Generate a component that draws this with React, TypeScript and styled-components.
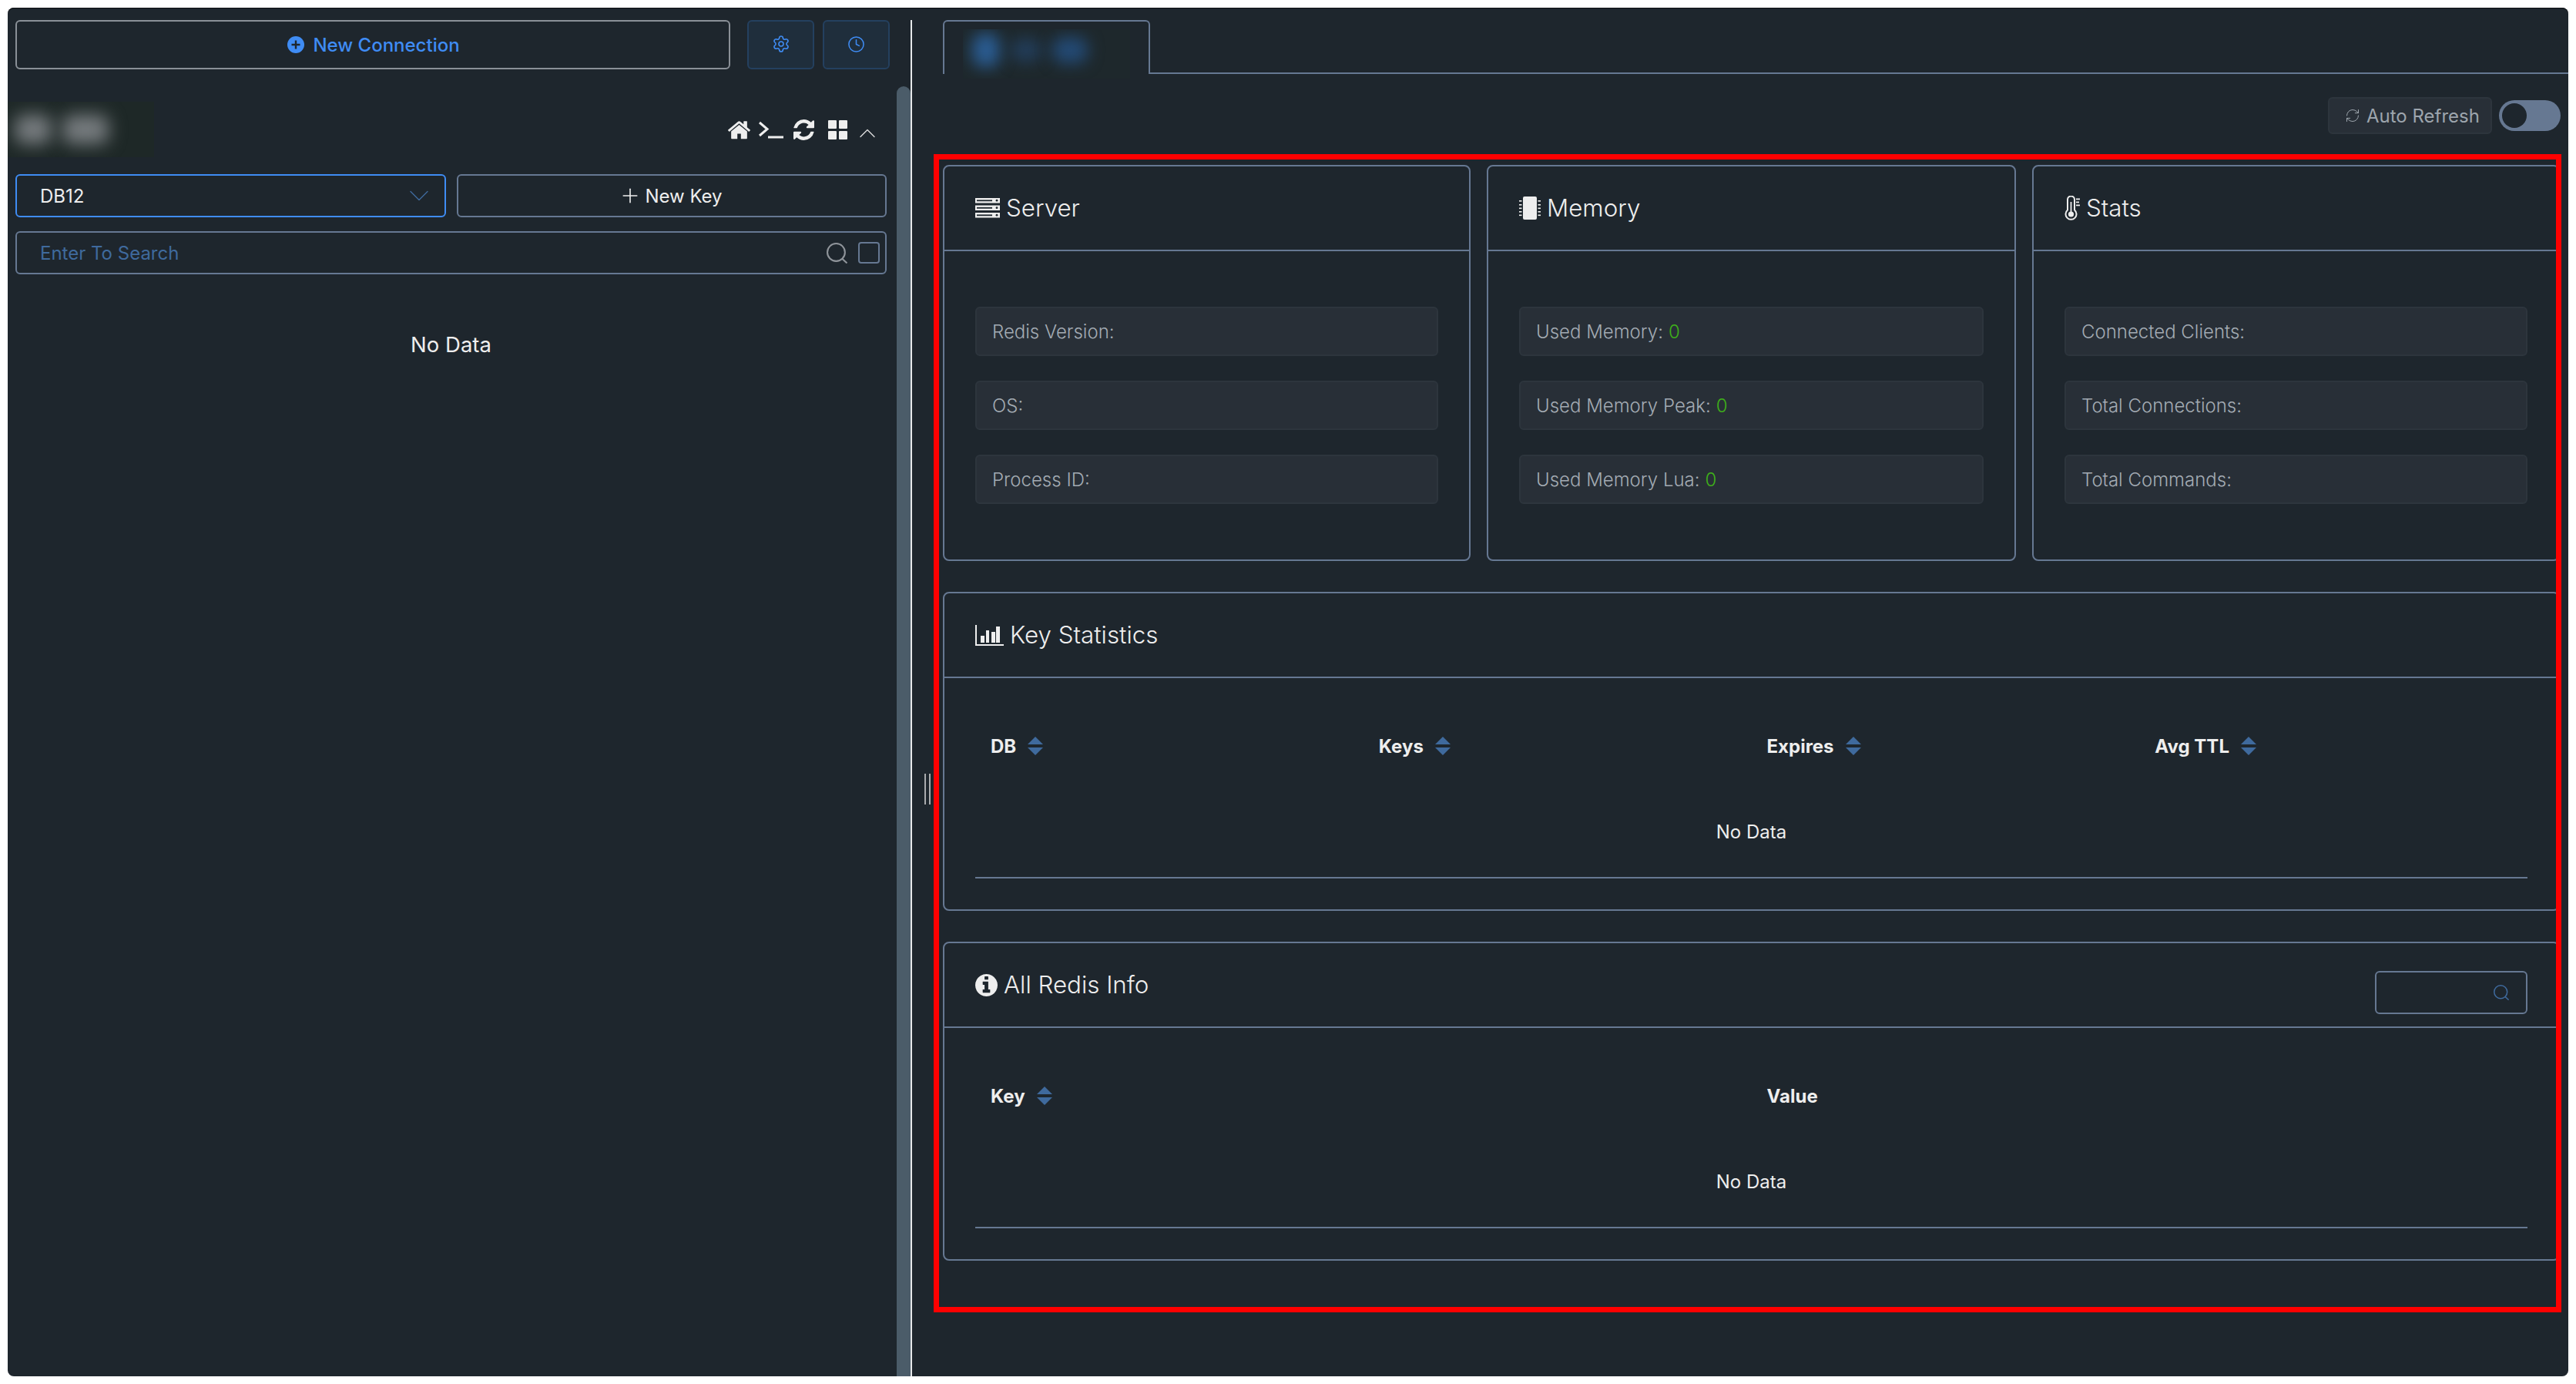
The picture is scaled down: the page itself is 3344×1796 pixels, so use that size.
import React from 'react'
import styled, { createGlobalStyle } from 'styled-components'
import { Plus, Settings, Clock, ChevronDown, ChevronUp, RefreshCw } from 'lucide-react'

const lineColor = '#667892'
const bgColor = '#1e262d'
const blue = '#3f8cf4'
const dimBlue = '#3f6a9d'

const GlobalStyle = createGlobalStyle`
  html, body {
    margin: 0;
    padding: 0;
    background: #fff;
    font-family: Inter, "Noto Sans", sans-serif;
  }
  * {
    box-sizing: border-box;
  }
`

const ServerIcon = () => (
  <svg width="32" height="26" viewBox="0 0 32 26" fill="none">
    {[0, 9.5, 19].map((y) => (
      <g key={y}>
        <rect x="0" y={y} width="32" height="6.5" fill="#eee" />
        <rect x="2" y={y + 2.4} width="20" height="1.8" fill={bgColor} />
        <circle cx="28" cy={y + 3.2} r="1.4" fill={bgColor} />
      </g>
    ))}
  </svg>
)

const ChipIcon = () => (
  <svg width="28" height="30" viewBox="0 0 28 30">
    <rect x="5" y="0" width="18" height="30" rx="2" fill="#eee" />
    {[6, 11, 15.5, 20, 24.5].map((y) => (
      <g key={y}>
        <rect x="0" y={y - 1} width="3.5" height="1.6" fill="#eee" />
        <rect x="24.5" y={y - 1} width="3.5" height="1.6" fill="#eee" />
      </g>
    ))}
  </svg>
)

const ThermometerIcon = () => (
  <svg width="20" height="32" viewBox="0 0 20 32" fill="none">
    <path
      d="M4 18.5V5a4.5 4.5 0 0 1 9 0v13.5a7 7 0 1 1-9 0Z"
      stroke="#eee"
      strokeWidth="2"
    />
    <rect x="7.6" y="8" width="1.8" height="14" fill="#eee" />
    <circle cx="8.5" cy="24" r="3.6" fill="#eee" />
    <rect x="15" y="3.5" width="5" height="1.8" fill="#eee" />
    <rect x="15" y="7.5" width="4" height="1.8" fill="#eee" />
    <rect x="15" y="11.5" width="5" height="1.8" fill="#eee" />
  </svg>
)

const BarChartIcon = () => (
  <svg width="37" height="27" viewBox="0 0 37 27">
    <rect x="0" y="0" width="2" height="27" fill="#eee" />
    <rect x="0" y="25" width="37" height="2" fill="#eee" />
    <rect x="7" y="14" width="5" height="9" fill="#eee" />
    <rect x="14" y="7" width="4" height="16" fill="#eee" />
    <rect x="21" y="9" width="5" height="14" fill="#eee" />
    <rect x="27" y="2" width="5" height="21" fill="#eee" />
  </svg>
)

const InfoIcon = () => (
  <svg width="29" height="29" viewBox="128 128 1536 1536" fill="#eee">
    <path d="M1152 1376v-160q0-14-9-23t-23-9h-96v-512q0-14-9-23t-23-9h-320q-14 0-23 9t-9 23v160q0 14 9 23t23 9h96v320h-96q-14 0-23 9t-9 23v160q0 14 9 23t23 9h448q14 0 23-9t9-23zm-128-896v-160q0-14-9-23t-23-9h-192q-14 0-23 9t-9 23v160q0 14 9 23t23 9h192q14 0 23-9t9-23zm640 416q0 209-103 385.5t-279.5 279.5-385.5 103-385.5-103-279.5-279.5-103-385.5 103-385.5 279.5-279.5 385.5-103 385.5 103 279.5 279.5 103 385.5z" />
  </svg>
)

const HomeIcon = () => (
  <svg width="29" height="29" viewBox="90 230 1612 1300" fill="#eee">
    <path d="M1472 992v480q0 26-19 45t-45 19h-384v-384h-256v384h-384q-26 0-45-19t-19-45v-480q0-1 .5-3t.5-3l575-474 575 474q1 2 1 6zm223-69l-62 74q-8 9-21 11h-3q-13 0-21-7l-692-577-692 577q-12 8-24 7-13-2-21-11l-62-74q-8-10-7-23.5t11-21.5l719-599q32-26 76-26t76 26l244 204v-195q0-14 9-23t23-9h192q14 0 23 9t9 23v408l219 182q10 8 11 21.5t-7 23.5z" />
  </svg>
)

const TerminalIcon = () => (
  <svg width="32" height="24" viewBox="0 0 32 24" fill="none" stroke="#eee" strokeWidth="3">
    <path d="M1 3 L11 11.5 L1 20" />
    <path d="M12 22 H32" />
  </svg>
)

const SyncIcon = () => (
  <svg width="27" height="27" viewBox="128 128 1536 1536" fill="#eee">
    <path d="M1639 1056q0 5-1 7-64 268-268 434.5t-478 166.5q-146 0-282.5-55t-243.5-157l-129 129q-19 19-45 19t-45-19-19-45v-448q0-26 19-45t45-19h448q26 0 45 19t19 45-19 45l-137 137q71 66 161 102t187 36q134 0 250-65t186-179q11-17 53-117 8-23 30-23h192q13 0 22.5 9.5t9.5 22.5zm25-800v448q0 26-19 45t-45 19h-448q-26 0-45-19t-19-45 19-45l138-138q-148-137-349-137-134 0-250 65t-186 179q-11 17-53 117-8 23-30 23h-199q-13 0-22.5-9.5t-9.5-22.5v-7q65-268 270-434.5t480-166.5q146 0 284 55.5t245 156.5l130-129q19-19 45-19t45 19 19 45z" />
  </svg>
)

const GridIcon = () => (
  <svg width="25" height="25" viewBox="0 0 25 25" fill="#eee">
    <rect x="0" y="0" width="11" height="11" rx="1" />
    <rect x="14" y="0" width="11" height="11" rx="1" />
    <rect x="0" y="14" width="11" height="11" rx="1" />
    <rect x="14" y="14" width="11" height="11" rx="1" />
  </svg>
)

const LensIcon = ({ size, color }: { size: number; color: string }) => (
  <svg width={size} height={size} viewBox="0 0 26 26" fill="none" stroke={color} strokeWidth="2">
    <circle cx="12" cy="12" r="11" />
    <path d="M19.5 20 L25.5 25.5" />
  </svg>
)

const PlusCircleIcon = () => (
  <svg width="22" height="22" viewBox="0 0 22 22">
    <circle cx="11" cy="11" r="11" fill={blue} />
    <path d="M11 5.5v11M5.5 11h11" stroke={bgColor} strokeWidth="2.4" />
  </svg>
)

const serverRows = ['Redis Version:', 'OS:', 'Process ID:']
const memoryRows = ['Used Memory:', 'Used Memory Peak:', 'Used Memory Lua:']
const statsRows = ['Connected Clients:', 'Total Connections:', 'Total Commands:']

const App: React.FC = () => {
  return (
    <Window>
      <GlobalStyle />
      <Aside>
        <TopBar>
          <ConnectionButton>
            <PlusCircleIcon />
            New Connection
          </ConnectionButton>
          <IconButton>
            <Settings size={24} strokeWidth={1.6} />
          </IconButton>
          <IconButton>
            <Clock size={23} strokeWidth={1.6} />
          </IconButton>
        </TopBar>
        <AsideBody>
          <AsideContent>
            <ConnectionHeader>
              <BlurPatch>
                <GreyBlob />
                <GreyBlob $wide />
              </BlurPatch>
              <HeaderIcons>
                <HomeIcon />
                <TerminalIcon />
                <SyncIcon />
                <GridIcon />
                <ChevronUp size={36} strokeWidth={0.9} color="#ddd" />
              </HeaderIcons>
            </ConnectionHeader>
            <KeyActions>
              <DbSelect>
                DB12
                <ChevronDown size={44} strokeWidth={0.75} color={dimBlue} />
              </DbSelect>
              <NewKeyButton>
                <Plus size={30} strokeWidth={1.3} />
                New Key
              </NewKeyButton>
            </KeyActions>
            <SearchBox>
              <SearchInput placeholder="Enter To Search" />
              <LensIcon size={27} color="#8f949a" />
              <CheckBox />
            </SearchBox>
            <AsideEmpty>No Data</AsideEmpty>
          </AsideContent>
          <ScrollThumb />
        </AsideBody>
      </Aside>
      <Divider />
      <Resizer>
        <ResizerLine />
        <ResizerLine />
      </Resizer>
      <Main>
        <TabBar>
          <Tab>
            <TabBlur>
              <BlueBlob $w={36} $h={44} $color="#2a5c92" />
              <BlueBlob $w={40} $h={30} $color="#223d5a" />
              <BlueBlob $w={46} $h={34} $color="#234a75" />
            </TabBlur>
          </Tab>
        </TabBar>
        <Content>
          <RefreshRow>
            <RefreshTag>
              <RefreshCw size={20} strokeWidth={1.2} />
              Auto Refresh
            </RefreshTag>
            <Toggle>
              <ToggleKnob />
            </Toggle>
          </RefreshRow>
          <CardGrid>
            <Card>
              <CardHeader>
                <CardTitle>
                  <ServerIcon />
                  Server
                </CardTitle>
              </CardHeader>
              <StatBody>
                {serverRows.map((label) => (
                  <StatRow key={label}>{label}</StatRow>
                ))}
              </StatBody>
            </Card>
            <Card>
              <CardHeader>
                <CardTitle>
                  <ChipIcon />
                  Memory
                </CardTitle>
              </CardHeader>
              <StatBody>
                {memoryRows.map((label) => (
                  <StatRow key={label}>
                    {label} <StatValue>0</StatValue>
                  </StatRow>
                ))}
              </StatBody>
            </Card>
            <Card>
              <CardHeader>
                <CardTitle>
                  <ThermometerIcon />
                  Stats
                </CardTitle>
              </CardHeader>
              <StatBody>
                {statsRows.map((label) => (
                  <StatRow key={label}>{label}</StatRow>
                ))}
              </StatBody>
            </Card>
          </CardGrid>
          <WideCard>
            <CardHeader>
              <CardTitle>
                <BarChartIcon />
                Key Statistics
              </CardTitle>
            </CardHeader>
            <TableBody>
              <TableHead $cols={4}>
                {['DB', 'Keys', 'Expires', 'Avg TTL'].map((name) => (
                  <HeadCell key={name}>
                    {name}
                    <SortCaret>
                      <CaretUp />
                      <CaretDown />
                    </SortCaret>
                  </HeadCell>
                ))}
              </TableHead>
              <TableEmpty>No Data</TableEmpty>
            </TableBody>
          </WideCard>
          <WideCard>
            <CardHeader>
              <CardTitle>
                <InfoIcon />
                All Redis Info
              </CardTitle>
              <MiniSearch>
                <LensIcon size={20} color={dimBlue} />
              </MiniSearch>
            </CardHeader>
            <TableBody>
              <TableHead $cols={2}>
                <HeadCell>
                  Key
                  <SortCaret>
                    <CaretUp />
                    <CaretDown />
                  </SortCaret>
                </HeadCell>
                <HeadCell>Value</HeadCell>
              </TableHead>
              <TableEmpty>No Data</TableEmpty>
            </TableBody>
          </WideCard>
        </Content>
      </Main>
      <Highlight />
    </Window>
  )
}

export default App

const Window = styled.div`
  position: relative;
  display: flex;
  width: 3324px;
  height: 1776px;
  margin: 10px;
  background: ${bgColor};
  box-shadow: inset 0 1px 0 #0b0e11;
  border-radius: 8px;
  overflow: hidden;
  color: #eee;
`

const Aside = styled.div`
  display: flex;
  flex-direction: column;
  width: 1172px;
`

const TopBar = styled.div`
  display: flex;
  gap: 11px;
  height: 80px;
  padding: 16px 17px 0 10px;
`

const ConnectionButton = styled.button`
  display: flex;
  align-items: center;
  justify-content: center;
  gap: 11px;
  width: 928px;
  height: 64px;
  margin-right: 11px;
  padding: 0 0 0 2px;
  background: transparent;
  border: 2px solid #8a9097;
  border-radius: 6px;
  color: ${blue};
  font-family: inherit;
  font-size: 24px;
  font-weight: 500;
`

const IconButton = styled.button`
  display: flex;
  align-items: center;
  justify-content: center;
  width: 87px;
  height: 64px;
  padding: 0 0 2px;
  background: #1f2e3c;
  border: 2px solid #24405f;
  border-radius: 6px;
  color: ${blue};
`

const AsideBody = styled.div`
  display: flex;
  flex: 1;
  min-height: 0;
  padding-top: 22px;
`

const AsideContent = styled.div`
  flex: 1;
  margin-top: -22px;
  padding-right: 13px;
`

const ScrollThumb = styled.div`
  width: 18px;
  background: #4b5c69;
  border-radius: 9px 9px 0 0;
`

const ConnectionHeader = styled.div`
  display: flex;
  align-items: center;
  justify-content: space-between;
  height: 136px;
  padding-top: 20px;
`

const BlurPatch = styled.div`
  display: flex;
  align-items: center;
  gap: 14px;
  width: 190px;
  height: 72px;
  padding-left: 9px;
  background: #1e2827;
  overflow: hidden;
`

const GreyBlob = styled.div<{ $wide?: boolean }>`
  flex: none;
  width: ${(p) => (p.$wide ? '60px' : '48px')};
  height: 38px;
  background: #767b7e;
  border-radius: 12px;
  filter: blur(11px);
`

const HeaderIcons = styled.div`
  display: flex;
  align-items: center;
  gap: 13px;
  margin: 0 16px 0 0;

  svg:nth-child(2) {
    margin-left: -2px;
  }

  svg:nth-child(4) {
    margin-left: 5px;
  }

  svg:nth-child(5) {
    margin: 9px -9px 0 -5px;
  }
`

const KeyActions = styled.div`
  display: flex;
  gap: 14px;
  padding-left: 10px;
`

const DbSelect = styled.div`
  display: flex;
  align-items: center;
  justify-content: space-between;
  width: 559px;
  height: 56px;
  padding: 0 22px 0 30px;
  border: 2px solid ${blue};
  border-radius: 6px;
  font-size: 24px;

  svg {
    margin: 0 -11px;
  }
`

const NewKeyButton = styled.button`
  display: flex;
  align-items: center;
  justify-content: center;
  gap: 4px;
  width: 558px;
  height: 56px;
  padding: 0 3px 0 0;
  background: transparent;
  border: 2px solid ${lineColor};
  border-radius: 6px;
  color: #eee;
  font-family: inherit;
  font-size: 24px;
`

const SearchBox = styled.div`
  display: flex;
  align-items: center;
  width: 1131px;
  height: 56px;
  margin: 18px 0 0 10px;
  padding: 0 7px 0 30px;
  border: 2px solid ${lineColor};
  border-radius: 6px;
`

const SearchInput = styled.input`
  flex: 1;
  min-width: 0;
  padding: 0;
  background: transparent;
  border: 0;
  outline: 0;
  color: #eee;
  font-family: inherit;
  font-size: 24px;

  &::placeholder {
    color: ${dimBlue};
    opacity: 1;
  }
`

const CheckBox = styled.div`
  width: 28px;
  height: 28px;
  margin-left: 14px;
  border: 2px solid ${lineColor};
  border-radius: 4px;
`

const AsideEmpty = styled.div`
  margin-top: 74px;
  padding-left: 10px;
  width: 1141px;
  text-align: center;
  font-size: 27.5px;
  line-height: 34px;
`

const Divider = styled.div`
  width: 2px;
  margin-top: 16px;
  background: #e6e8ea;
`

const Resizer = styled.div`
  display: flex;
  align-items: center;
  justify-content: center;
  gap: 4px;
  width: 40px;
  padding-top: 252px;
`

const ResizerLine = styled.div`
  width: 2px;
  height: 40px;
  background: #a9abad;
`

const Main = styled.div`
  display: flex;
  flex-direction: column;
  flex: 1;
  min-width: 0;
`

const TabBar = styled.div`
  height: 86px;
  padding-top: 16px;
  border-bottom: 2px solid ${lineColor};
`

const Tab = styled.div`
  width: 269px;
  height: 70px;
  padding: 10px 24px 0;
  border: 2px solid ${lineColor};
  border-bottom: 0;
  border-radius: 6px 6px 0 0;
  background: ${bgColor};
`

const TabBlur = styled.div`
  display: flex;
  align-items: center;
  gap: 14px;
  height: 64px;
  padding: 0 0 10px 12px;
  background: #1e282c;
  overflow: hidden;
`

const BlueBlob = styled.div<{ $w: number; $h: number; $color: string }>`
  flex: none;
  width: ${(p) => p.$w}px;
  height: ${(p) => p.$h}px;
  background: ${(p) => p.$color};
  border-radius: 14px;
  filter: blur(10px);
`

const Content = styled.div`
  flex: 1;
  padding-right: 11px;
`

const RefreshRow = styled.div`
  display: flex;
  align-items: center;
  justify-content: flex-end;
  gap: 9px;
  height: 48px;
  margin: 30px -1px 40px 0;
`

const RefreshTag = styled.div`
  display: flex;
  align-items: center;
  gap: 8px;
  width: 213px;
  height: 48px;
  padding-left: 20px;
  background: #282f37;
  border: 2px solid #2d353d;
  border-radius: 6px;
  color: #9da5ad;
  font-size: 24px;
  white-space: nowrap;
`

const Toggle = styled.div`
  display: flex;
  align-items: center;
  width: 80px;
  height: 40px;
  padding: 4px;
  background: ${lineColor};
  border-radius: 20px;
`

const ToggleKnob = styled.div`
  width: 32px;
  height: 32px;
  background: ${bgColor};
  border-radius: 50%;
`

const CardGrid = styled.div`
  display: grid;
  grid-template-columns: 685px 687px 685px;
  gap: 21px;
`

const Card = styled.div`
  border: 2px solid ${lineColor};
  border-radius: 8px;
`

const WideCard = styled(Card)`
  margin-top: 40px;
`

const CardHeader = styled.div`
  display: flex;
  align-items: center;
  justify-content: space-between;
  height: 110px;
  padding: 0 40px;
  border-bottom: 2px solid ${lineColor};
`

const CardTitle = styled.div`
  display: flex;
  align-items: center;
  gap: 8px;
  font-size: 31.3px;
  font-weight: 300;
`

const StatBody = styled.div`
  display: flex;
  flex-direction: column;
  gap: 32px;
  padding: 72px 40px 72px;
`

const StatRow = styled.div`
  display: flex;
  align-items: center;
  gap: 7px;
  height: 64px;
  padding: 0 20px;
  background: #282f37;
  border: 2px solid #2d353d;
  border-radius: 6px;
  color: #a3abb3;
  font-size: 24px;
  font-weight: 300;
`

const StatValue = styled.span`
  color: #3fb119;
`

const TableBody = styled.div`
  padding: 40px;
`

const TableHead = styled.div<{ $cols: number }>`
  display: grid;
  grid-template-columns: repeat(${(p) => p.$cols}, 1fr);
  height: 96px;
`

const HeadCell = styled.div`
  display: flex;
  align-items: center;
  gap: 15px;
  padding: 0 20px;
  font-size: 24px;
  font-weight: 700;
`

const SortCaret = styled.div`
  display: flex;
  flex-direction: column;
  gap: 4px;
`

const CaretUp = styled.div`
  width: 0;
  height: 0;
  border-left: 10px solid transparent;
  border-right: 10px solid transparent;
  border-bottom: 10px solid ${dimBlue};
`

const CaretDown = styled.div`
  width: 0;
  height: 0;
  border-left: 10px solid transparent;
  border-right: 10px solid transparent;
  border-top: 10px solid ${dimBlue};
`

const TableEmpty = styled.div`
  display: flex;
  align-items: center;
  justify-content: center;
  height: 124px;
  padding-top: 5px;
  border-bottom: 2px solid ${lineColor};
  font-size: 24px;
`

const MiniSearch = styled.div`
  display: flex;
  align-items: center;
  justify-content: flex-end;
  width: 198px;
  height: 56px;
  margin-top: 19px;
  padding-right: 22px;
  border: 2px solid ${lineColor};
  border-radius: 6px;
`

const Highlight = styled.div`
  position: absolute;
  left: 1202px;
  top: 190px;
  width: 2113px;
  height: 1503px;
  border: 7px solid #ff0000;
  pointer-events: none;
`
